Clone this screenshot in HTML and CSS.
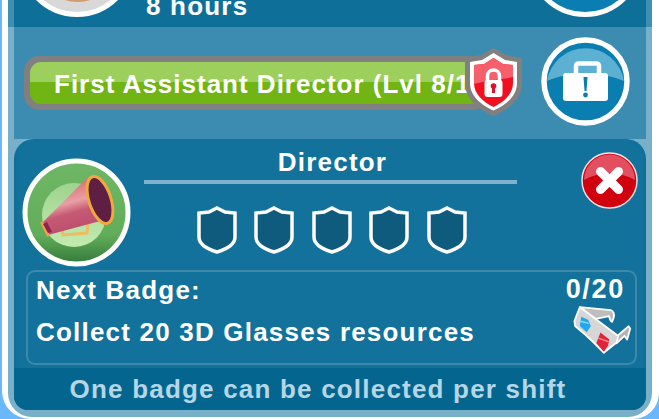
FILE: index.html
```html
<!DOCTYPE html>
<html lang="en">
<head>
<meta charset="utf-8">
<title>Director</title>
<link rel="stylesheet" href="styles.css">
</head>
<body>
<div class="frame">
  <div class="strip">
    <header class="top">
      <div class="disc-grey"><div class="disc-grey-in"></div></div>
      <div class="hours">8 hours</div>
      <div class="disc-blue"></div>
    </header>
    <section class="level">
      <div class="bar">
        <div class="bar-in">First Assistant Director (Lvl 8/10)</div>
      </div>
      <svg class="lock" viewBox="0 0 60 70" aria-hidden="true">
        <path d="M29.5 1 L42 8 L58 11 V36 C58 52 44 63 29.5 69 C15 63 1 52 1 36 V11 L17 8Z" fill="#808080"/>
        <path d="M29.5 6 L41 13 L53 15 V36 C53 49 42 58 29.5 63.5 C17 58 6 49 6 36 V15 L18 13Z" fill="#fff"/>
        <path d="M29.5 11 L39 17 L49 18 V36 C49 47 40 55 29.5 60 C19 55 10 47 10 36 V18 L20 17Z" fill="#f0101f"/>
        <path d="M29.5 11 L39 17 L49 18 V30 C36 33 22 33 10 37 V18 L20 17Z" fill="#f6606c"/>
        <path d="M23.5 34 V29 C23.5 21 35.5 21 35.5 29 V34" fill="none" stroke="#fff" stroke-width="3.5"/>
        <rect x="20.5" y="33" width="18" height="17" rx="3" fill="#fff"/>
        <circle cx="29.5" cy="39" r="2.8" fill="#d8142a"/>
        <rect x="28" y="39" width="3" height="7" fill="#d8142a"/>
      </svg>
      <svg class="case" viewBox="0 0 89 89" aria-hidden="true">
        <circle cx="44.5" cy="44.5" r="41.5" fill="#0a7eb0" stroke="#fff" stroke-width="5.5"/>
        <path d="M6 44 A39 39 0 0 1 83 44 C60 34 28 34 6 44Z" fill="#5cb0d1"/>
        <path d="M35 37 V29 Q35 26.5 38 26.5 H55 Q58 26.5 58 29 V37" fill="none" stroke="#fff" stroke-width="4.5"/>
        <rect x="22" y="36" width="45" height="28" rx="3" fill="#fff"/>
        <path d="M42.5 40 H46.5 L45.5 54 H43.5Z" fill="#0a7eb0"/>
        <circle cx="44.5" cy="58" r="2.4" fill="#0a7eb0"/>
      </svg>
    </section>
    <section class="panel">
      <div class="head">
        <svg class="mega" viewBox="0 0 109 109" aria-hidden="true">
          <defs>
            <linearGradient id="ring" x1="0" y1="0" x2="0" y2="1">
              <stop offset="0" stop-color="#6fb766"/>
              <stop offset=".72" stop-color="#62ad5a"/>
              <stop offset="1" stop-color="#33793a"/>
            </linearGradient>
            <linearGradient id="core" x1="0" y1="0" x2="0" y2="1">
              <stop offset="0" stop-color="#9fd38e"/>
              <stop offset="1" stop-color="#c3ebb0"/>
            </linearGradient>
            <linearGradient id="horn" x1="0.35" y1="0" x2="0.65" y2="1">
              <stop offset="0" stop-color="#d85f60"/>
              <stop offset=".42" stop-color="#e8a0a6"/>
              <stop offset=".6" stop-color="#c65a74"/>
              <stop offset="1" stop-color="#b84a6c"/>
            </linearGradient>
          </defs>
          <circle cx="54.5" cy="54.5" r="51.5" fill="url(#ring)" stroke="#fff" stroke-width="5"/>
          <circle cx="52" cy="57" r="32" fill="url(#core)"/>
          <path d="M40 68 L41 77 L65 75 L66 65" fill="none" stroke="#f0bb62" stroke-width="3"/>
          <path d="M65 20 L82 62 L26 77 L20 65Z" fill="url(#horn)"/>
          <path d="M20 65 L26 77" stroke="#f0a14a" stroke-width="3" stroke-linecap="round"/>
          <path d="M21 66 L26 75 L30 74 L25 64Z" fill="#8f2350"/>
          <ellipse cx="78" cy="42" rx="11" ry="24.5" transform="rotate(-18 78 42)" fill="#5f1f42" stroke="#f0a83f" stroke-width="3"/>
        </svg>
        <div class="title-col">
          <h2 class="title">Director</h2>
          <div class="shields">
            <svg class="shield" viewBox="0 0 40 48" aria-hidden="true"><path d="M20 2 L28 6 L38 7 V31 C38 38 30 43 20 46 C10 43 2 38 2 31 V7 L12 6Z" fill="#0e5b7d" stroke="#fff" stroke-width="3.5"/></svg>
            <svg class="shield" viewBox="0 0 40 48" aria-hidden="true"><path d="M20 2 L28 6 L38 7 V31 C38 38 30 43 20 46 C10 43 2 38 2 31 V7 L12 6Z" fill="#0e5b7d" stroke="#fff" stroke-width="3.5"/></svg>
            <svg class="shield" viewBox="0 0 40 48" aria-hidden="true"><path d="M20 2 L28 6 L38 7 V31 C38 38 30 43 20 46 C10 43 2 38 2 31 V7 L12 6Z" fill="#0e5b7d" stroke="#fff" stroke-width="3.5"/></svg>
            <svg class="shield" viewBox="0 0 40 48" aria-hidden="true"><path d="M20 2 L28 6 L38 7 V31 C38 38 30 43 20 46 C10 43 2 38 2 31 V7 L12 6Z" fill="#0e5b7d" stroke="#fff" stroke-width="3.5"/></svg>
            <svg class="shield" viewBox="0 0 40 48" aria-hidden="true"><path d="M20 2 L28 6 L38 7 V31 C38 38 30 43 20 46 C10 43 2 38 2 31 V7 L12 6Z" fill="#0e5b7d" stroke="#fff" stroke-width="3.5"/></svg>
          </div>
        </div>
        <svg class="close" viewBox="0 0 57 57" aria-hidden="true">
          <circle cx="28.5" cy="28.5" r="27.5" fill="#d0000f" stroke="#f1e4e4" stroke-width="1.5"/>
          <path d="M3 28 A25.5 25.5 0 0 1 54 28 C38 19 19 19 3 28Z" fill="#e2505f"/>
          <path d="M19.5 19.5 L37.5 37.5 M37.5 19.5 L19.5 37.5" stroke="#fff" stroke-width="9" stroke-linecap="round"/>
        </svg>
      </div>
      <div class="next">
        <div class="next-text">
          <div class="next-label">Next Badge:</div>
          <div class="next-goal">Collect 20 3D Glasses resources</div>
        </div>
        <div class="next-side">
          <div class="next-count">0/20</div>
          <svg class="glasses" viewBox="38 28 172 136" preserveAspectRatio="none" aria-hidden="true">
            <g stroke="#fff" stroke-width="5" stroke-linejoin="round">
              <path d="M58 34 L148 42 Q160 46 157 62 L152 74 Q145 70 143 58 L105 66Z" fill="#bdbdbd"/>
              <path d="M160 118 L200 86 L205 92 L196 122 L188 112 L165 132Z" fill="#b5b5b5"/>
              <path d="M58 34 L170 112 L165 130 L128 158 L96 128 L75 110 L44 85 L42 72Z" fill="#d6d6d6"/>
            </g>
            <path d="M62 60 L82 68 L90 85 L78 102 L58 85Z" fill="#1fa7ef"/>
            <path d="M60 72 L84 78" stroke="#8fdcff" stroke-width="4"/>
            <path d="M118 103 L144 122 L140 138 L128 155 L106 132Z" fill="#e22437"/>
            <path d="M112 118 L142 128" stroke="#f58a94" stroke-width="4"/>
          </svg>
        </div>
      </div>
      <footer class="foot">One badge can be collected per shift</footer>
    </section>
  </div>
</div>
</body>
</html>
```
FILE: styles.css
```css
* { box-sizing: border-box; }
html, body { margin: 0; height: 100%; overflow: hidden; }
body {
  background: #6ab8fb;
  font-family: "Liberation Sans", Arial, sans-serif;
  font-weight: 700;
  font-size: 26px;
  letter-spacing: 1.2px;
  color: #fff;
}
.frame {
  width: 657px;
  height: 419px;
  margin-left: 2px;
  padding: 0 7px 2px 5.5px;
  background: #fff;
  border-radius: 0 0 26px 28px;
}
.strip {
  height: 417px;
  padding: 0 6px 7px 6.5px;
  background: linear-gradient(#3f8fb2 27px, #78afc9 27px);
  border-radius: 0 0 24px 24px;
  display: flex;
  flex-direction: column;
}
.top {
  height: 27px;
  background: #0e7099;
  position: relative;
  overflow: hidden;
  flex: none;
}
.hours {
  position: absolute;
  left: 132px;
  top: -8px;
  line-height: 28px;
  white-space: nowrap;
}
.disc-grey, .disc-blue {
  position: absolute;
  width: 116px;
  height: 116px;
  top: -99px;
  border-radius: 50%;
  border: 5px solid #fff;
}
.disc-grey { left: 5px; background: #d8d8d8; padding: 10.5px; }
.disc-grey-in { width: 100%; height: 100%; border-radius: 50%; background: #d59a6e; }
.disc-blue { left: 513px; background: #0a7eb0; }
.level {
  height: 112px;
  background: #3c8bb0;
  display: flex;
  align-items: center;
  flex: none;
  position: relative;
  padding-left: 10px;
}
.bar {
  width: 464px;
  height: 54px;
  background: #808080;
  border-radius: 15px;
  padding: 6px;
  flex: none;
}
.bar-in {
  height: 42px;
  border-radius: 11px;
  background: linear-gradient(#9ccf5b 20px, #70b513 20px);
  overflow: hidden;
  padding-left: 24px;
  line-height: 44px;
  letter-spacing: 1px;
  white-space: nowrap;
}
.lock { width: 60px; height: 70px; margin: -2px 0 0 -24px; flex: none; position: relative; }
.case { width: 89px; height: 89px; margin: -3px 0 0 17px; flex: none; }
.panel {
  flex: 1;
  min-height: 0;
  background: #12729b;
  border-radius: 20px 20px 14px 14px;
  overflow: hidden;
  display: flex;
  flex-direction: column;
  box-shadow: inset 0 -3px 4px rgba(0, 60, 90, .2);
}
.head {
  display: flex;
  align-items: flex-start;
  padding: 13px 0 0 8px;
  height: 131px;
  flex: none;
}
.mega { width: 109px; height: 109px; margin-top: 6px; flex: none; }
.title-col { width: 373px; margin-left: 13px; flex: none; }
.title {
  margin: 0;
  font-size: 26px;
  line-height: 20px;
  text-align: center;
  height: 28px;
  padding-left: 4px;
}
.shields {
  border-top: 4px solid #7fb2cc;
  display: flex;
  justify-content: center;
  gap: 17.5px;
  padding: 22px 0 0 2px;
}
.shield { width: 40px; height: 48px; flex: none; }
.close { width: 57px; height: 57px; margin-left: 64px; flex: none; }
.next {
  margin: 0 9px 0 12px;
  height: 95px;
  flex: none;
  border: 2.5px solid #3f88aa;
  border-radius: 9px;
  display: flex;
  justify-content: space-between;
  padding: 0 10px 0 8px;
  line-height: 28px;
}
.next-label { margin-top: 4px; }
.next-goal { margin-top: 14px; white-space: nowrap; }
.next-side { display: flex; flex-direction: column; align-items: flex-end; }
.next-count { margin-top: 3px; font-size: 27px; letter-spacing: 1.7px; }
.glasses { width: 59px; height: 50px; margin: 1.5px -7px 0 0; display: block; }
.foot {
  flex: 1;
  margin-top: 3px;
  padding-right: 24px;
  background: #04668f;
  color: #b4d6e6;
  text-align: center;
  line-height: 42px;
}
```
